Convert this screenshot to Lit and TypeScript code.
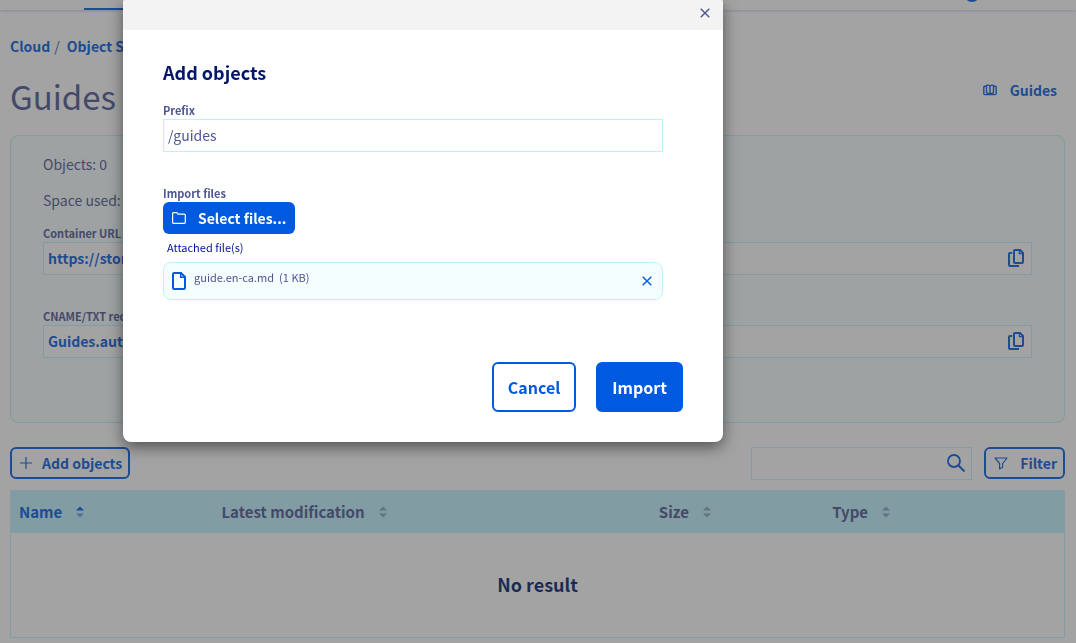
import { LitElement, html, css, svg, nothing } from "lit";
import { customElement, state } from "lit/decorators.js";
import { classMap } from "lit/directives/class-map.js";

const icon = (w: number, h: number, body: unknown) =>
  html`<svg width=${w} height=${h} viewBox="0 0 ${w} ${h}" fill="none" stroke="currentColor" aria-hidden="true">${body}</svg>`;

const cross = icon(
  10, 10,
  svg`<path d="M.7.7l8.6 8.6M9.3.7L.7 9.3" stroke-width="1.4"/>`
);
const folder = icon(
  14, 12,
  svg`<path d="M.6 1.6q0-1 1-1h2.8q.7 0 1 .6l.5.9h6.4q1 0 1 1v7.2q0 1-1 1H1.6q-1 0-1-1z" stroke-width="1.2"/>`
);
const file = icon(
  14, 18,
  svg`<path d="M1 2.2Q1 1 2.2 1H9l4 4v10.8q0 1.2-1.2 1.2H2.2Q1 17 1 15.8z" stroke-width="2"/><path d="M8.7 1v4.3H13" stroke-width="1.4"/>`
);
const copy = icon(
  16, 18,
  svg`<path d="M6 2q0-1 1-1h5l3 3v9q0 1-1 1H7q-1 0-1-1z" stroke-width="2"/><path d="M11.3 1.4v3.2h3.4" stroke-width="1.2"/><path d="M4.2 4H2Q1 4 1 5v11q0 1 1 1h9" stroke-width="2"/>`
);
const plus = icon(12, 12, svg`<path d="M6 0v12M0 6h12" stroke-width="1.2"/>`);
const funnel = icon(
  14, 13,
  svg`<path d="M1 1h12L8.600 6.500v3.800L5.600 12V6.500z" stroke-width="1.2" stroke-linejoin="round"/>`
);
const lens = icon(
  18, 18,
  svg`<circle cx="7" cy="7" r="6" stroke-width="1.8"/><path d="M11.3 11.3l6.2 6.2" stroke-width="2"/>`
);
const book = icon(
  14, 12,
  svg`<path d="M3.2 2.2H1.8q-1 0-1 1v6.4q0 1 1 1h10.400q1 0 1-1V3.200q0-1-1-1h-1.400M3.500 9.300V1.400q2.200-.8 3.500.8 1.300-1.600 3.500-.8v7.900M7 2.200v8.200M3.500 9.300q2.300-.5 3.500 1.100 1.200-1.600 3.500-1.100" stroke-width="1.4"/>`
);

type SortKey = "name" | "date" | "size" | "type";

@customElement("app-root")
export class AppRoot extends LitElement {
  @state() private sort: SortKey = "name";
  @state() private modalOpen = true;
  @state() private files = [{ name: "guide.en-ca.md", size: "1 KB" }];

  private columns: { key: SortKey; label: string }[] = [
    { key: "name", label: "Name" },
    { key: "date", label: "Latest modification" },
    { key: "size", label: "Size" },
    { key: "type", label: "Type" },
  ];

  static styles = css`
    :host {
      display: block;
      min-height: 100vh;
      background: #fff;
      color: #4d5592;
      font-family: "Source Sans Pro", "Noto Sans CJK SC", sans-serif;
      font-size: 14px;
      line-height: 20px;
    }
    * { box-sizing: border-box; }
    svg { display: block; flex: none; }
    button, input { font: inherit; color: inherit; margin: 0; }
    button { cursor: pointer; background: none; border: 0; padding: 0; }
    a { color: #005ae0; font-weight: 700; text-decoration: none; }

    .topbar {
      display: flex;
      justify-content: space-between;
      height: 10px;
      padding: 0 96px 0 84px;
      box-shadow: 0 1px 3px rgba(0, 14, 156, 0.2);
    }
    .tab { width: 120px; border-bottom: 2px solid #005ae0; }
    .avatar { width: 16px; height: 16px; margin-top: -14px; border-radius: 50%; background: #005ae0; }

    .page { padding: 26px 11px 5px 10px; }
    .crumbs { display: flex; gap: 4px; }
    .crumbs span { margin-right: 3px; }
    .heading { display: flex; justify-content: space-between; align-items: center; padding: 16px 8px 15px 0; }
    h1 { margin: 0; font-size: 33px; line-height: 48px; font-weight: 400; }
    .guides { display: flex; align-items: center; gap: 13px; margin-bottom: 12px; }

    .card {
      display: flex;
      flex-direction: column;
      padding: 18px 32px 64px;
      border: 1px solid #bef1ff;
      border-radius: 8px;
      background: #f5feff;
    }
    .card p { margin: 0 0 16px; }
    .card .last { margin-bottom: 14px; }
    .field { display: flex; flex-direction: column; }
    .field + .field { margin-top: 32px; }
    label, .caption { font-size: 11px; line-height: 18px; font-weight: 700; }
    .box { display: flex; align-items: center; height: 33px; border: 1px solid #bef1ff; background: #fff; }
    .box input { flex: 1; min-width: 0; height: 31px; border: 0; padding: 0 4px 2px; background: none; outline: 0; }
    .box button { color: #005ae0; padding: 0 6px 2px; }
    .box.url input { color: #005ae0; font-weight: 700; }
    .box.url button { padding: 0 7px 2px; }

    .toolbar { display: flex; align-items: flex-start; gap: 12px; margin: 24px 0 10px; }
    .search { width: 221px; margin-left: auto; }
    .outline {
      display: flex;
      align-items: center;
      gap: 10px;
      height: 32px;
      padding: 0 6px 0 8px;
      border: 2px solid #005ae0;
      border-radius: 6px;
      color: #005ae0;
      font-weight: 700;
    }
    .filter { gap: 12px; }

    table { width: 100%; border-collapse: collapse; table-layout: fixed; border: 1px solid #bef1ff; }
    .c-name { width: 19.25%; }
    .c-date { width: 41.5%; }
    .c-size { width: 16.45%; }
    th { height: 42px; padding: 0 8px; background: #bef1ff; text-align: left; }
    th button { display: flex; align-items: center; gap: 14px; font-size: 15px; font-weight: 700; }
    th path { opacity: 0.5; }
    .sorted { color: #005ae0; }
    .sorted .up { opacity: 1; }
    td { height: 105px; padding: 0 0 2px; text-align: center; color: #00176b; font-size: 18px; font-weight: 700; }

    .overlay {
      position: fixed;
      inset: 0;
      display: flex;
      justify-content: center;
      align-items: flex-start;
      padding-right: 230px;
      background: rgba(61, 61, 61, 0.475);
    }
    .modal {
      width: 600px;
      border-radius: 2px 2px 8px 8px;
      background: #fff;
      box-shadow: 0 5px 15px rgba(0, 0, 0, 0.5);
      overflow: hidden;
    }
    .modal-top { display: flex; justify-content: flex-end; align-items: center; height: 30px; padding: 0 13px 4px; background: #f3f3f3; }
    .modal-body { padding: 29px 60px 0 40px; }
    h2 { margin: 0 0 15px; color: #00176b; font-size: 18px; line-height: 27px; font-weight: 700; }
    .modal .field + .field { align-items: flex-start; }
    .select {
      display: flex;
      align-items: center;
      gap: 12px;
      height: 32px;
      padding: 0 9px;
      border-radius: 6px;
      background: #005ae0;
      color: #fff;
      font-weight: 700;
    }
    .attached { padding: 0 4px; margin: 4px 0 6px; color: #000e9c; font-size: 11px; line-height: 18px; }
    .file {
      display: flex;
      width: 100%;
      height: 38px;
      gap: 8px;
      padding: 5px 10px 0 8px;
      border: 1px solid #bef1ff;
      border-radius: 8px;
      background: #f5feff;
      color: #005ae0;
      font-size: 11px;
      line-height: 18px;
    }
    .file svg { margin-top: 4px; }
    .file span { color: #4d5592; }
    .file button { margin: 0 0 9px auto; }
    .file .size { margin-left: -3px; }
    .actions { display: flex; justify-content: flex-end; gap: 20px; padding: 62px 40px 30px; }
    .actions button { height: 50px; padding: 0 14px; border: 2px solid #005ae0; border-radius: 6px; color: #005ae0; font-size: 16px; font-weight: 700; }
    .actions .primary { background: #005ae0; color: #fff; }
  `;

  private urlField(id: string, label: string, value: string) {
    return html`<div class="field">
      <label for=${id}>${label}</label>
      <div class="box url">
        <input id=${id} readonly .value=${value} />
        <button aria-label="Copy">${copy}</button>
      </div>
    </div>`;
  }

  private modal() {
    const close = () => (this.modalOpen = false);
    return html`<div class="overlay">
      <div class="modal" role="dialog" aria-modal="true" aria-labelledby="modal-title">
        <div class="modal-top"><button aria-label="Close" @click=${close}>${cross}</button></div>
        <div class="modal-body">
          <h2 id="modal-title">Add objects</h2>
          <div class="field">
            <label for="prefix">Prefix</label>
            <div class="box"><input id="prefix" .value=${"/guides"} /></div>
          </div>
          <div class="field">
            <div class="caption">Import files</div>
            <button class="select">${folder} Select files...</button>
            <div class="attached">Attached file(s)</div>
            ${this.files.map(
              (f) => html`<div class="file">
                ${file}<span>${f.name}</span><span class="size">(${f.size})</span>
                <button aria-label="Remove" @click=${() => (this.files = this.files.filter((x) => x !== f))}>${cross}</button>
              </div>`
            )}
          </div>
        </div>
        <div class="actions">
          <button @click=${close}>Cancel</button>
          <button class="primary">Import</button>
        </div>
      </div>
    </div>`;
  }

  render() {
    return html`
      <header class="topbar"><div class="tab"></div><div class="avatar"></div></header>
      <main class="page">
        <nav class="crumbs"><a href="#">Cloud</a><span>/</span><a href="#">Object Storage</a></nav>
        <div class="heading">
          <h1>Guides</h1>
          <a class="guides" href="#">${book} Guides</a>
        </div>
        <section class="card">
          <p>Objects: 0</p>
          <p class="last">Space used: 0 B</p>
          ${this.urlField("url", "Container URL", "https://storage.cloud")}
          ${this.urlField("cname", "CNAME/TXT record", "Guides.auth")}
        </section>
        <div class="toolbar">
          <button class="outline" @click=${() => (this.modalOpen = true)}>${plus} Add objects</button>
          <div class="box search">
            <input type="text" aria-label="Search" />
            <button aria-label="Search">${lens}</button>
          </div>
          <button class="outline filter">${funnel} Filter</button>
        </div>
        <table>
          <colgroup><col class="c-name" /><col class="c-date" /><col class="c-size" /><col /></colgroup>
          <thead>
            <tr>
              ${this.columns.map(
                (c) => html`<th>
                  <button class=${classMap({ sorted: this.sort === c.key })} @click=${() => (this.sort = c.key)}>
                    ${c.label}
                    <svg width="8" height="12" viewBox="0 0 8 12" fill="currentColor" aria-hidden="true">
                      <path class="up" d="M0 4.500L4 .5l4 4z" /><path d="M0 7.500l4 4 4-4z" />
                    </svg>
                  </button>
                </th>`
              )}
            </tr>
          </thead>
          <tbody><tr><td colspan="4">No result</td></tr></tbody>
        </table>
      </main>
      ${this.modalOpen ? this.modal() : nothing}
    `;
  }
}
